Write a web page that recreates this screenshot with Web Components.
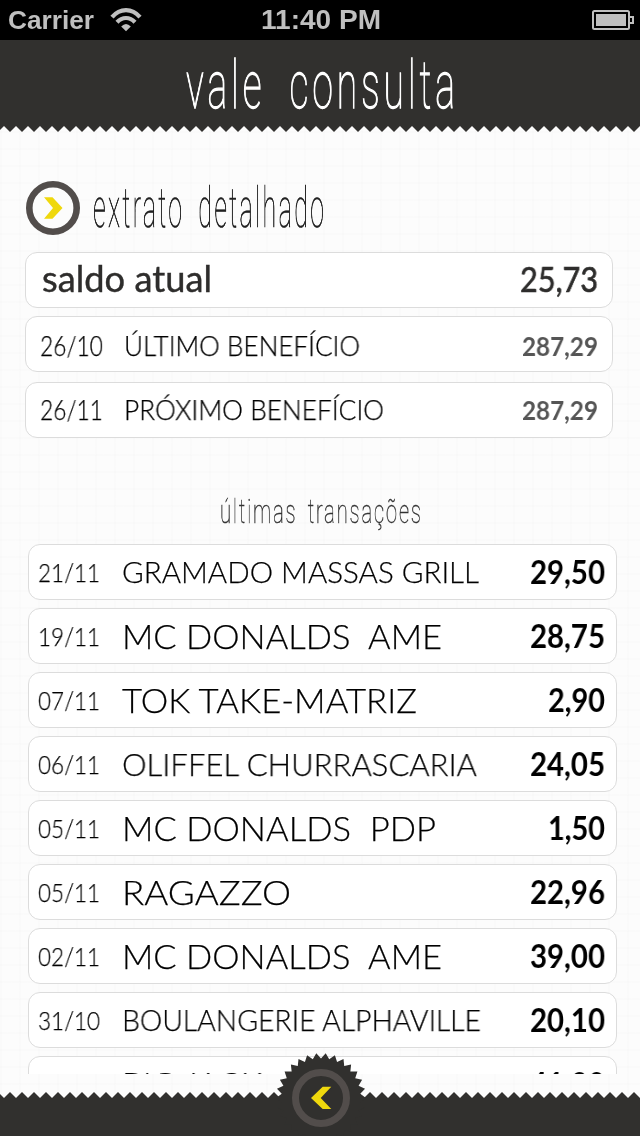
<!DOCTYPE html>
<html lang="pt-BR">
<head>
<meta charset="utf-8">
<title>vale consulta</title>
<style>
  body {
    margin: 0;
    width: 640px;
    height: 1136px;
    overflow: hidden;
    font-family: "Lato", "Open Sans", sans-serif;
  }
</style>
</head>
<body>
<vale-app>
  <status-bar slot="top" carrier="Carrier" time="11:40 PM"></status-bar>
  <title-bar slot="top"><fit-text thin width="269" size="67" stroke="1.3" spacing="7" word="20">vale consulta</fit-text></title-bar>

  <section-title><fit-text thin width="231" size="55" stroke="0.7" spacing="5" word="12">extrato detalhado</fit-text></section-title>

  <balance-row kind="main" name="saldo atual" name-width="170" value="25,73" value-width="78"></balance-row>
  <balance-row kind="benefit" low date="26/10" date-width="63" name="ÚLTIMO BENEFÍCIO" name-width="236" value="287,29" value-width="76"></balance-row>
  <balance-row kind="benefit" date="26/11" date-width="63" name="PRÓXIMO BENEFÍCIO" name-width="260" value="287,29" value-width="76"></balance-row>

  <list-title><fit-text thin width="201" size="33" stroke="0.5" spacing="3" word="6">últimas transações</fit-text></list-title>
  <transaction-list></transaction-list>

  <bottom-bar slot="bottom"></bottom-bar>
</vale-app>

<script>
const DARK = "#31302e";
const RING = "#524d4b";
const YELLOW = "#efd80d";

const TRANSACTIONS = [
  { date: "21/11", name: "GRAMADO MASSAS GRILL", width: 357, size: 29, value: "29,50" },
  { date: "19/11", name: "MC DONALDS  AME", width: 320, size: 34, value: "28,75" },
  { date: "07/11", name: "TOK TAKE-MATRIZ", width: 295, size: 34, value: "2,90" },
  { date: "06/11", name: "OLIFFEL CHURRASCARIA", width: 355, size: 32, value: "24,05" },
  { date: "05/11", name: "MC DONALDS  PDP", width: 314, size: 34, value: "1,50" },
  { date: "05/11", name: "RAGAZZO", width: 169, size: 34, value: "22,96" },
  { date: "02/11", name: "MC DONALDS  AME", width: 320, size: 34, value: "39,00" },
  { date: "31/10", name: "BOULANGERIE ALPHAVILLE", width: 359, size: 29, value: "20,10" },
  { date: "30/10", name: "BIG JACK", width: 140, size: 34, value: "41,90" }
];

// Sawtooth edge shared by the header and the footer, teeth every 12px
function zigzag(up) {
  const tooth = up ? "4,6 10,0 16,6" : "4,0 10,6 16,0";
  return `
    <svg width="640" height="6" viewBox="0 0 640 6">
      <pattern id="tooth" x="4" width="12" height="6" patternUnits="userSpaceOnUse">
        <polygon transform="translate(-4)" fill="${DARK}" points="${tooth}"/>
      </pattern>
      <rect width="640" height="6" fill="url(#tooth)"/>
    </svg>`;
}

class BaseElement extends HTMLElement {
  constructor() {
    super();
    this.attachShadow({ mode: "open" });
  }

  render(html) {
    const template = document.createElement("template");
    template.innerHTML = html;
    this.shadowRoot.replaceChildren(template.content.cloneNode(true));
  }
}

// Text squeezed or stretched to a given width
class FitText extends BaseElement {
  connectedCallback() {
    const width = Number(this.getAttribute("width"));
    const spacing = Number(this.getAttribute("spacing") || 0);
    this.render(`
      <style>
        :host {
          display: block;
          flex: none;
          width: ${width}px;
          font-size: ${this.getAttribute("size")}px;
          font-weight: ${this.getAttribute("weight") || 400};
        }
        :host([thin]) {
          font-family: Roboto, "Open Sans", sans-serif;
          font-weight: 100;
        }
        span {
          display: inline-block;
          white-space: pre;
          transform-origin: 0 50%;
          will-change: transform;
          letter-spacing: ${spacing}px;
          word-spacing: ${this.getAttribute("word") || 0}px;
          -webkit-text-stroke: ${this.getAttribute("stroke") || 0}px currentColor;
        }
      </style>
      <span><slot></slot></span>
    `);
    const span = this.shadowRoot.querySelector("span");
    span.style.transform = `scaleX(${width / (span.getBoundingClientRect().width - spacing)})`;
  }
}

class StatusBar extends BaseElement {
  connectedCallback() {
    this.render(`
      <style>
        :host {
          display: grid;
          grid-template-columns: 1fr auto 1fr;
          align-items: center;
          box-sizing: border-box;
          height: 40px;
          padding: 0 6px 0 8px;
          background: #000;
          color: #bfbfbf;
          font: bold 26px/38px "Liberation Sans", Arial, sans-serif;
        }
        .left { display: flex; align-items: center; gap: 16px; }
        .battery { justify-self: end; }
        svg { display: block; }
      </style>
      <div class="left">
        <fit-text width="86" size="26" weight="700">${this.getAttribute("carrier")}</fit-text>
        <svg width="32" height="24" viewBox="0 0 32 24" fill="none" stroke="#bfbfbf" stroke-width="4.2">
          <path d="M2 9.2C10-.2 22-.2 30 9.2"/>
          <path d="M7 14.2C12.2 8.6 19.8 8.6 25 14.2"/>
          <path d="M16 23.2L11.2 18.6Q16 13.6 20.8 18.6Z" fill="#bfbfbf" stroke="none"/>
        </svg>
      </div>
      <fit-text width="120" size="27" weight="700">${this.getAttribute("time")}</fit-text>
      <svg class="battery" width="42" height="20" viewBox="0 0 42 20">
        <rect x="1" y="1" width="36" height="18" rx="1.5" fill="none" stroke="#bfbfbf" stroke-width="2"/>
        <rect x="4" y="4" width="30" height="12" fill="#bfbfbf"/>
        <path d="M38 7H41V13H38" fill="none" stroke="#bfbfbf" stroke-width="2"/>
      </svg>
    `);
  }
}

class TitleBar extends BaseElement {
  connectedCallback() {
    this.render(`
      <style>
        :host { display: block; color: #fff; }
        .bar {
          display: flex;
          justify-content: center;
          height: 86px;
          background: ${DARK};
          line-height: 90px;
        }
        svg { display: block; }
      </style>
      <div class="bar"><slot></slot></div>
      ${zigzag(false)}
    `);
  }
}

class SectionTitle extends BaseElement {
  connectedCallback() {
    this.render(`
      <style>
        :host {
          display: flex;
          align-items: center;
          gap: 13px;
          height: 56px;
          margin: 48px 0 16px 26px;
          color: #222;
          line-height: 56px;
        }
      </style>
      <svg width="54" height="54" viewBox="0 0 54 54">
        <circle cx="27" cy="27" r="23.7" fill="#fcfcfc" stroke="${RING}" stroke-width="6.6"/>
        <path d="M18 16.3H26.5L36.5 27L26.5 37.8H18L27 27Z" fill="${YELLOW}"/>
      </svg>
      <slot></slot>
    `);
  }
}

class BalanceRow extends BaseElement {
  connectedCallback() {
    const attr = (name) => this.getAttribute(name);
    const main = attr("kind") === "main";
    const date = attr("date")
      ? `<fit-text class="date" width="${attr("date-width")}" size="26.5" weight="300" stroke="0.25">${attr("date")}</fit-text>`
      : "";
    this.render(`
      <style>
        :host {
          display: flex;
          box-sizing: border-box;
          width: 588px;
          height: 56px;
          margin: 0 0 10px 25px;
          padding: 0 14px;
          border: 1px solid #dcdcdc;
          border-radius: 12px;
          background: #fff;
          color: #000;
          line-height: 55px;
        }
        :host([kind="main"]) { margin-bottom: 8px; padding-left: 16px; color: #2e2d2c; line-height: 50px; }
        :host([low]) { line-height: 59px; }
        .date { margin-right: 21px; }
        .value { margin-left: auto; color: #555; }
        :host([kind="main"]) .value { color: #2e2d2c; line-height: 52px; }
      </style>
      ${date}
      <fit-text width="${attr("name-width")}" size="${main ? 36 : 26.5}" weight="${main ? 400 : 300}" stroke="${main ? 0.4 : 0.25}">${attr("name")}</fit-text>
      <fit-text class="value" width="${attr("value-width")}" size="${main ? 34 : 26.5}" weight="${main ? 400 : 700}" stroke="${main ? 0.7 : 0}">${attr("value")}</fit-text>
    `);
  }
}

class ListTitle extends BaseElement {
  connectedCallback() {
    this.render(`
      <style>
        :host {
          display: flex;
          justify-content: center;
          height: 40px;
          padding: 43px 0 13px;
          color: #333;
          line-height: 42px;
        }
      </style>
      <slot></slot>
    `);
  }
}

class TransactionRow extends BaseElement {
  set data(item) {
    const valueWidth = item.value.length > 4 ? 75 : 57;
    this.render(`
      <style>
        :host {
          display: flex;
          flex: none;
          box-sizing: border-box;
          height: 56px;
          padding: 0 11px 0 9px;
          border: 1px solid #dcdcdc;
          border-radius: 12px;
          background: #fff;
          color: #000;
          line-height: 54px;
        }
        .date { margin-right: 22px; }
        .value { margin-left: auto; }
      </style>
      <fit-text class="date" width="62" size="26" weight="300" stroke="0.25">${item.date}</fit-text>
      <fit-text width="${item.width}" size="${item.size}" weight="300" stroke="0.25">${item.name}</fit-text>
      <fit-text class="value" width="${valueWidth}" size="32" weight="700">${item.value}</fit-text>
    `);
  }
}

class TransactionList extends BaseElement {
  connectedCallback() {
    this.render(`
      <style>
        :host {
          display: flex;
          flex-direction: column;
          gap: 8px;
          width: 589px;
          height: 530px;
          margin-left: 28px;
          overflow: hidden;
        }
      </style>
    `);
    TRANSACTIONS.forEach((item) => {
      const row = document.createElement("transaction-row");
      this.shadowRoot.appendChild(row);
      row.data = item;
    });
  }
}

class BottomBar extends BaseElement {
  connectedCallback() {
    this.render(`
      <style>
        :host { display: block; position: relative; }
        .bar { height: 38px; background: ${DARK}; }
        svg { display: block; }
        /* the round button rises above the bar */
        .back { position: absolute; left: 276px; top: -39px; }
      </style>
      ${zigzag(true)}
      <div class="bar"></div>
      <svg class="back" width="90" height="83" viewBox="0 0 90 83">
        <polygon fill="${DARK}" points="${this.gear(30, 45, 39.5)}"/>
        <circle cx="45" cy="45" r="25.5" fill="none" stroke="${RING}" stroke-width="7"/>
        <path d="M55.3 33.7H46.7L35 45L46.7 56H55.3L44.7 45Z" fill="${YELLOW}"/>
      </svg>
    `);
  }

  gear(teeth, outer, inner) {
    const points = [];
    for (let i = 0; i < teeth * 2; i++) {
      const angle = (i * Math.PI) / teeth - Math.PI / 2;
      const radius = i % 2 ? outer : inner;
      points.push(`${(45 + radius * Math.cos(angle)).toFixed(2)},${(45 + radius * Math.sin(angle)).toFixed(2)}`);
    }
    return points.join(" ");
  }
}

class ValeApp extends BaseElement {
  connectedCallback() {
    this.render(`
      <style>
        :host {
          display: flex;
          flex-direction: column;
          height: 1136px;
          /* faint woven paper */
          background:
            repeating-linear-gradient(0deg, rgba(0,0,0,.008) 0 2px, transparent 2px 17px),
            repeating-linear-gradient(90deg, rgba(0,0,0,.008) 0 2px, transparent 2px 19px),
            #fcfcfc;
        }
        main { flex: 1; min-height: 0; display: flow-root; }
      </style>
      <slot name="top"></slot>
      <main><slot></slot></main>
      <slot name="bottom"></slot>
    `);
  }
}

customElements.define("fit-text", FitText);
customElements.define("status-bar", StatusBar);
customElements.define("title-bar", TitleBar);
customElements.define("section-title", SectionTitle);
customElements.define("balance-row", BalanceRow);
customElements.define("list-title", ListTitle);
customElements.define("transaction-row", TransactionRow);
customElements.define("transaction-list", TransactionList);
customElements.define("bottom-bar", BottomBar);
customElements.define("vale-app", ValeApp);
</script>
</body>
</html>
